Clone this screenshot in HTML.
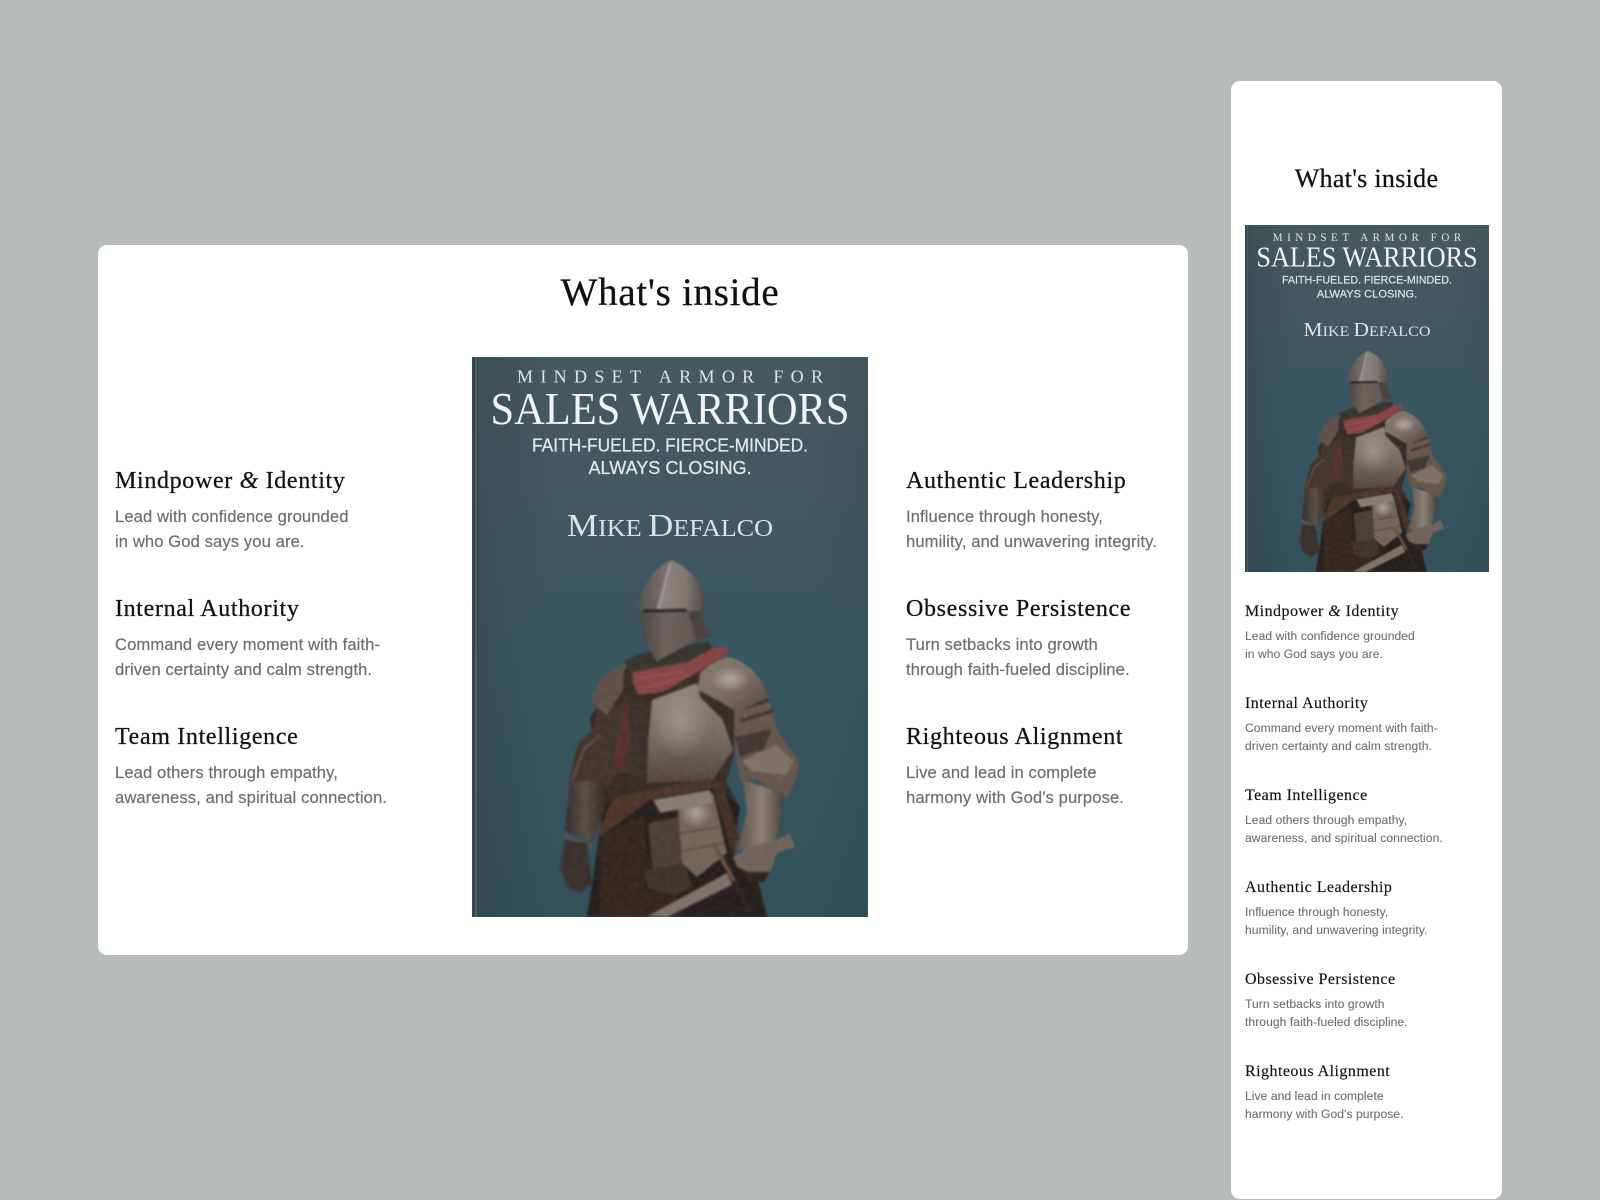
<!DOCTYPE html>
<html lang="en">
<head>
<meta charset="utf-8">
<title>What's inside</title>
<style>
html,body{margin:0;padding:0}
body{width:1600px;height:1200px;background:#b6bcbc;position:relative;overflow:hidden}
.card{position:absolute;background:#fff;border-radius:9px}
.desk{left:98px;top:245px;width:1090px;height:710px}
.mob{left:1231px;top:81px;width:271px;height:1118px}
h2,h3,p{margin:0;font-weight:400;color:#111}
h2,h3{font-family:"Liberation Serif",serif;-webkit-text-stroke:.25px #111}
h2{position:absolute;white-space:nowrap;text-align:center}
p{font-family:"Liberation Sans",sans-serif;color:#6d6d72;white-space:nowrap;-webkit-text-stroke:.18px #6d6d72}
h3 i{font-style:italic}
.desk h2{left:0;width:1144px;top:25.5px;font-size:39px;line-height:44px;letter-spacing:.7px}
.col{position:absolute}
.desk .col{top:222.7px}
.desk .l{left:17px}.desk .r{left:808px}
.desk .it{height:128px}
.desk h3{font-size:24px;line-height:26px;letter-spacing:.66px}
.desk p{font-size:16.6px;line-height:24.6px;letter-spacing:.1px;margin-top:11.8px}
.cover{position:absolute;display:block}
.desk .cover{left:374px;top:112px;width:396px;height:560px}
.mob h2{left:0;width:271px;top:83px;font-size:26px;line-height:30px;letter-spacing:.3px}
.mob .cover{left:14px;top:144px;width:244px;height:347px}
.mob .col{left:14px;top:521.8px}
.mob .it{height:92px}
.mob h3{font-size:16px;line-height:18px;letter-spacing:.46px;-webkit-text-stroke:.15px #111}
.mob p{font-size:12.1px;line-height:18px;letter-spacing:.06px;margin-top:6.7px;-webkit-text-stroke:.1px #6d6d72}
.cover text{font-family:"Liberation Serif",serif}
.cover .s{font-family:"Liberation Sans",sans-serif;stroke:#e3e8e8;stroke-width:.25px}
</style>
</head>
<body>
<svg width="0" height="0" style="position:absolute">
<defs>
<linearGradient id="bg" x1="0" y1="0" x2="0" y2="1"><stop offset="0" stop-color="#46595e"/><stop offset=".22" stop-color="#43585f"/><stop offset=".5" stop-color="#3a5661"/><stop offset="1" stop-color="#34505b"/></linearGradient>
<linearGradient id="edge" x1="0" y1="0" x2="1" y2="0"><stop offset="0" stop-color="#2b3c42" stop-opacity=".35"/><stop offset=".2" stop-color="#2b3c42" stop-opacity="0"/><stop offset=".85" stop-color="#2b3c42" stop-opacity="0"/><stop offset="1" stop-color="#2b3c42" stop-opacity=".15"/></linearGradient>
<linearGradient id="helmL" x1="0" y1="0" x2="1" y2="0"><stop offset="0" stop-color="#5a5250"/><stop offset="1" stop-color="#7c7470"/></linearGradient>
<linearGradient id="helmR" x1="0" y1="0" x2="1" y2="0"><stop offset="0" stop-color="#8f8985"/><stop offset=".6" stop-color="#7d7570"/><stop offset="1" stop-color="#4d4541"/></linearGradient>
<linearGradient id="visor" x1="0" y1="0" x2="1" y2="0"><stop offset="0" stop-color="#4c4542"/><stop offset=".45" stop-color="#6a625c"/><stop offset="1" stop-color="#5e5650"/></linearGradient>
<linearGradient id="breast" x1="0" y1="0" x2="0" y2="1"><stop offset="0" stop-color="#8f877e"/><stop offset=".55" stop-color="#746a5f"/><stop offset="1" stop-color="#52463c"/></linearGradient>
<linearGradient id="pauld" x1="0" y1="0" x2="1" y2="1"><stop offset="0" stop-color="#83776d"/><stop offset=".5" stop-color="#7d7066"/><stop offset="1" stop-color="#4e423a"/></linearGradient>
<linearGradient id="fore" x1="0" y1="0" x2="1" y2="0"><stop offset="0" stop-color="#5e5249"/><stop offset=".55" stop-color="#8a7f74"/><stop offset="1" stop-color="#4c413a"/></linearGradient>
<linearGradient id="lfore" x1="0" y1="0" x2="1" y2="0"><stop offset="0" stop-color="#352c29"/><stop offset=".5" stop-color="#5a4e47"/><stop offset="1" stop-color="#2e2623"/></linearGradient>
<radialGradient id="hi"><stop offset="0" stop-color="#bdb5ab" stop-opacity=".8"/><stop offset="1" stop-color="#bdb5ab" stop-opacity="0"/></radialGradient>
<filter id="soft" x="-5%" y="-5%" width="110%" height="110%" color-interpolation-filters="sRGB">
  <feGaussianBlur in="SourceGraphic" stdDeviation="1.1" result="b"/>
  <feTurbulence type="fractalNoise" baseFrequency=".16" numOctaves="2" seed="4" result="n"/>
  <feColorMatrix in="n" type="matrix" values="0 0 0 0 .75  0 0 0 0 .72  0 0 0 0 .68  1.2 0 0 0 -.45" result="light"/>
  <feComposite in="light" in2="b" operator="in" result="lc"/>
  <feColorMatrix in="lc" type="matrix" values="1 0 0 0 0 0 1 0 0 0 0 0 1 0 0 0 0 0 .1 0" result="lc2"/>
  <feMerge><feMergeNode in="b"/><feMergeNode in="lc2"/></feMerge>
</filter>
<symbol id="knight" viewBox="0 0 396 560">
<g filter="url(#soft)">
<!-- body backing -->
<path d="M150 312 L258 300 L262 345 L262 398 L254 425 L268 450 L262 500 L135 500 L128 440 L118 360Z" fill="#362c28"/>
<!-- robe -->
<path d="M131 453 L115 560 L295 560 L285 520 L258 496 L268 450 L241 423 L141 440Z" fill="#251f1d"/>
<path d="M128 480 L171 458 L176 513 L172 533 L205 537 L210 560 L128 560Z" fill="#33261f"/>
<!-- left upper arm -->
<path d="M96 430 L106 386 L121 373 L126 352 L171 345 L173 416 L145 416 L135 430Z" fill="#43352d"/>
<path d="M100 424 L112 392 L128 378" stroke="#5f4f44" stroke-width="2" fill="none"/>
<path d="M155 340 L158 380 L150 412 L140 408 L146 378Z" fill="#57302b"/>
<path d="M158 350 L175 345 L175 426 L160 420Z" fill="#3a312c"/>
<!-- left forearm + hand -->
<path d="M98 426 L93 473 L121 486 L133 453 L135 430 L118 424Z" fill="url(#lfore)"/>
<path d="M90 478 L120 490" stroke="#5c5048" stroke-width="3"/>
<path d="M88 510 L93 483 L115 486 L120 526 L108 536 L95 530Z" fill="#3a302d"/>
<!-- breastplate -->
<path d="M175 426 L176 383 L180 343 L225 326 L228 340 L251 363 L261 393 L241 423Z" fill="url(#breast)"/>
<ellipse cx="208" cy="366" rx="30" ry="34" fill="url(#hi)" opacity=".6"/>
<!-- belt -->
<path d="M141 440 L238 421 L241 431 L178 443 L128 480 L128 470Z" fill="#4c3428"/>
<path d="M238 423 L250 425 L268 482 L258 490 L244 440Z" fill="#443026"/>
<!-- tassets -->
<path d="M176 466 L206 460 L210 506 L181 513Z" fill="#4a4037"/>
<path d="M172 513 L212 506 L220 530 L204 538 L176 532Z" fill="#3f342c"/>
<path d="M205 443 L241 436 L255 496 L225 520 L210 506Z" fill="#726558"/>
<ellipse cx="224" cy="456" rx="16" ry="14" fill="url(#hi)"/>
<path d="M181 443 L238 433 L241 446 L188 456Z" fill="#857c72"/>
<path d="M208 476 L248 470 M210 494 L252 486" stroke="#554a40" stroke-width="1.6"/>
<!-- right elbow and arm -->
<path d="M262 345 L296 338 L305 373 L326 403 L326 416 L316 441 L285 423 L268 423 L263 393Z" fill="#64564c"/>
<path d="M265 353 L297 343 M268 364 L301 354" stroke="#3d332d" stroke-width="3" fill="none"/>
<path d="M263 380 L300 372 L292 392 L268 400Z" fill="#3f3834"/>
<path d="M270 404 L304 388 L322 404 L314 418 L280 414Z" fill="#7f7165"/>
<path d="M271 423 L311 436 L308 463 L301 496 L265 493 L275 456Z" fill="url(#fore)"/>
<path d="M261 500 L278 490 L305 483 L318 476 L323 490 L305 496 L298 516 L278 516 L265 510Z" fill="#6f6359"/>
<path d="M272 515 L298 515 L292 525 L276 524Z" fill="#2e2623"/>
<!-- pauldrons -->
<path d="M119 346 C121 332 128 318 153 306 L151 333 L135 358Z" fill="#5f5149"/>
<path d="M226 333 L228 316 C236 308 246 302 255 300 C272 302 290 318 296 341 L265 355 L245 343Z" fill="url(#pauld)"/>
<ellipse cx="258" cy="322" rx="20" ry="13" fill="url(#hi)"/>
<!-- neck -->
<path d="M152 304 L170 296 L238 284 L241 293 L215 307 L160 318Z" fill="#37352f"/>
<!-- scarf -->
<path d="M160 315 L215 305 L241 291 L255 290 L256 296 L221 318 L191 335 L166 338 L161 326Z" fill="#864442"/>
<path d="M165 322 L212 314 M170 332 L218 318" stroke="#a05656" stroke-width="2" fill="none" opacity=".7"/>
<!-- helmet -->
<path d="M216 254 L228 240 L232 268 L240 278 L225 285 L218 280Z" fill="#4a413d"/>
<path d="M199 203 C180 212 168 232 167 254 L188 255 L198 206Z" fill="url(#helmL)"/>
<path d="M199 203 C222 212 234 232 233 254 L216 254 L186 254 L198 206Z" fill="url(#helmR)"/>
<path d="M168 256 L216 255 L225 283 L185 304 L172 284Z" fill="url(#visor)"/>
<path d="M171 254 L215 253" stroke="#201c1a" stroke-width="2.6"/>
<path d="M198 206 L186 252" stroke="#c7c0b8" stroke-width="1.4" opacity=".75"/>
<!-- sword -->
<path d="M176 559 L255 516 L260 528 L195 560Z" fill="#7b736a"/>
<path d="M241 486 L262 524" stroke="#6b5040" stroke-width="4"/>
<path d="M262 524 L278 555" stroke="#2c2421" stroke-width="4"/>
</g>
</symbol>
</defs>
</svg>

<section class="card desk">
  <h2>What's inside</h2>
  <div class="col l">
    <div class="it"><h3>Mindpower <i>&amp;</i> Identity</h3><p>Lead with confidence grounded<br>in who God says you are.</p></div>
    <div class="it"><h3>Internal Authority</h3><p>Command every moment with faith-<br>driven certainty and calm strength.</p></div>
    <div class="it"><h3>Team Intelligence</h3><p>Lead others through empathy,<br>awareness, and spiritual connection.</p></div>
  </div>
  <svg class="cover" viewBox="0 0 396 560" preserveAspectRatio="none">
    <rect width="396" height="560" fill="url(#bg)"/>
    <rect width="396" height="560" fill="url(#edge)"/>
    <rect width="6" height="560" fill="#33494f"/><rect x="3" width="2" height="560" fill="#4a6168"/>
    <use href="#knight" width="396" height="560"/>
    <text x="198" y="25.5" text-anchor="middle" font-size="18" fill="#dfe5e5" textLength="306" lengthAdjust="spacing">MINDSET ARMOR FOR</text>
    <text x="198" y="67" text-anchor="middle" font-size="45.5" fill="#f1f4f4" textLength="359" lengthAdjust="spacingAndGlyphs">SALES WARRIORS</text>
    <text class="s" x="198" y="94.5" text-anchor="middle" font-size="18" fill="#e3e8e8" textLength="276" lengthAdjust="spacingAndGlyphs">FAITH-FUELED. FIERCE-MINDED.</text>
    <text class="s" x="198" y="117" text-anchor="middle" font-size="18" fill="#e3e8e8" textLength="163" lengthAdjust="spacingAndGlyphs">ALWAYS CLOSING.</text>
    <text x="198" y="179" text-anchor="middle" font-size="24" fill="#dbe3e3" textLength="206" lengthAdjust="spacingAndGlyphs"><tspan font-size="32">M</tspan>IKE <tspan font-size="32">D</tspan>EFALCO</text>
  </svg>
  <div class="col r">
    <div class="it"><h3>Authentic Leadership</h3><p>Influence through honesty,<br>humility, and unwavering integrity.</p></div>
    <div class="it"><h3>Obsessive Persistence</h3><p>Turn setbacks into growth<br>through faith-fueled discipline.</p></div>
    <div class="it"><h3>Righteous Alignment</h3><p>Live and lead in complete<br>harmony with God's purpose.</p></div>
  </div>
</section>

<section class="card mob">
  <h2>What's inside</h2>
  <svg class="cover" viewBox="0 0 396 560" preserveAspectRatio="none">
    <rect width="396" height="560" fill="url(#bg)"/>
    <rect width="396" height="560" fill="url(#edge)"/>
    <rect width="6" height="560" fill="#33494f"/><rect x="3" width="2" height="560" fill="#4a6168"/>
    <use href="#knight" width="396" height="560"/>
    <text x="198" y="25.5" text-anchor="middle" font-size="18" fill="#dfe5e5" textLength="306" lengthAdjust="spacing">MINDSET ARMOR FOR</text>
    <text x="198" y="67" text-anchor="middle" font-size="45.5" fill="#f1f4f4" textLength="359" lengthAdjust="spacingAndGlyphs">SALES WARRIORS</text>
    <text class="s" x="198" y="94.5" text-anchor="middle" font-size="18" fill="#e3e8e8" textLength="276" lengthAdjust="spacingAndGlyphs">FAITH-FUELED. FIERCE-MINDED.</text>
    <text class="s" x="198" y="117" text-anchor="middle" font-size="18" fill="#e3e8e8" textLength="163" lengthAdjust="spacingAndGlyphs">ALWAYS CLOSING.</text>
    <text x="198" y="179" text-anchor="middle" font-size="24" fill="#dbe3e3" textLength="206" lengthAdjust="spacingAndGlyphs"><tspan font-size="32">M</tspan>IKE <tspan font-size="32">D</tspan>EFALCO</text>
  </svg>
  <div class="col">
    <div class="it"><h3>Mindpower <i>&amp;</i> Identity</h3><p>Lead with confidence grounded<br>in who God says you are.</p></div>
    <div class="it"><h3>Internal Authority</h3><p>Command every moment with faith-<br>driven certainty and calm strength.</p></div>
    <div class="it"><h3>Team Intelligence</h3><p>Lead others through empathy,<br>awareness, and spiritual connection.</p></div>
    <div class="it"><h3>Authentic Leadership</h3><p>Influence through honesty,<br>humility, and unwavering integrity.</p></div>
    <div class="it"><h3>Obsessive Persistence</h3><p>Turn setbacks into growth<br>through faith-fueled discipline.</p></div>
    <div class="it"><h3>Righteous Alignment</h3><p>Live and lead in complete<br>harmony with God's purpose.</p></div>
  </div>
</section>
</body>
</html>
